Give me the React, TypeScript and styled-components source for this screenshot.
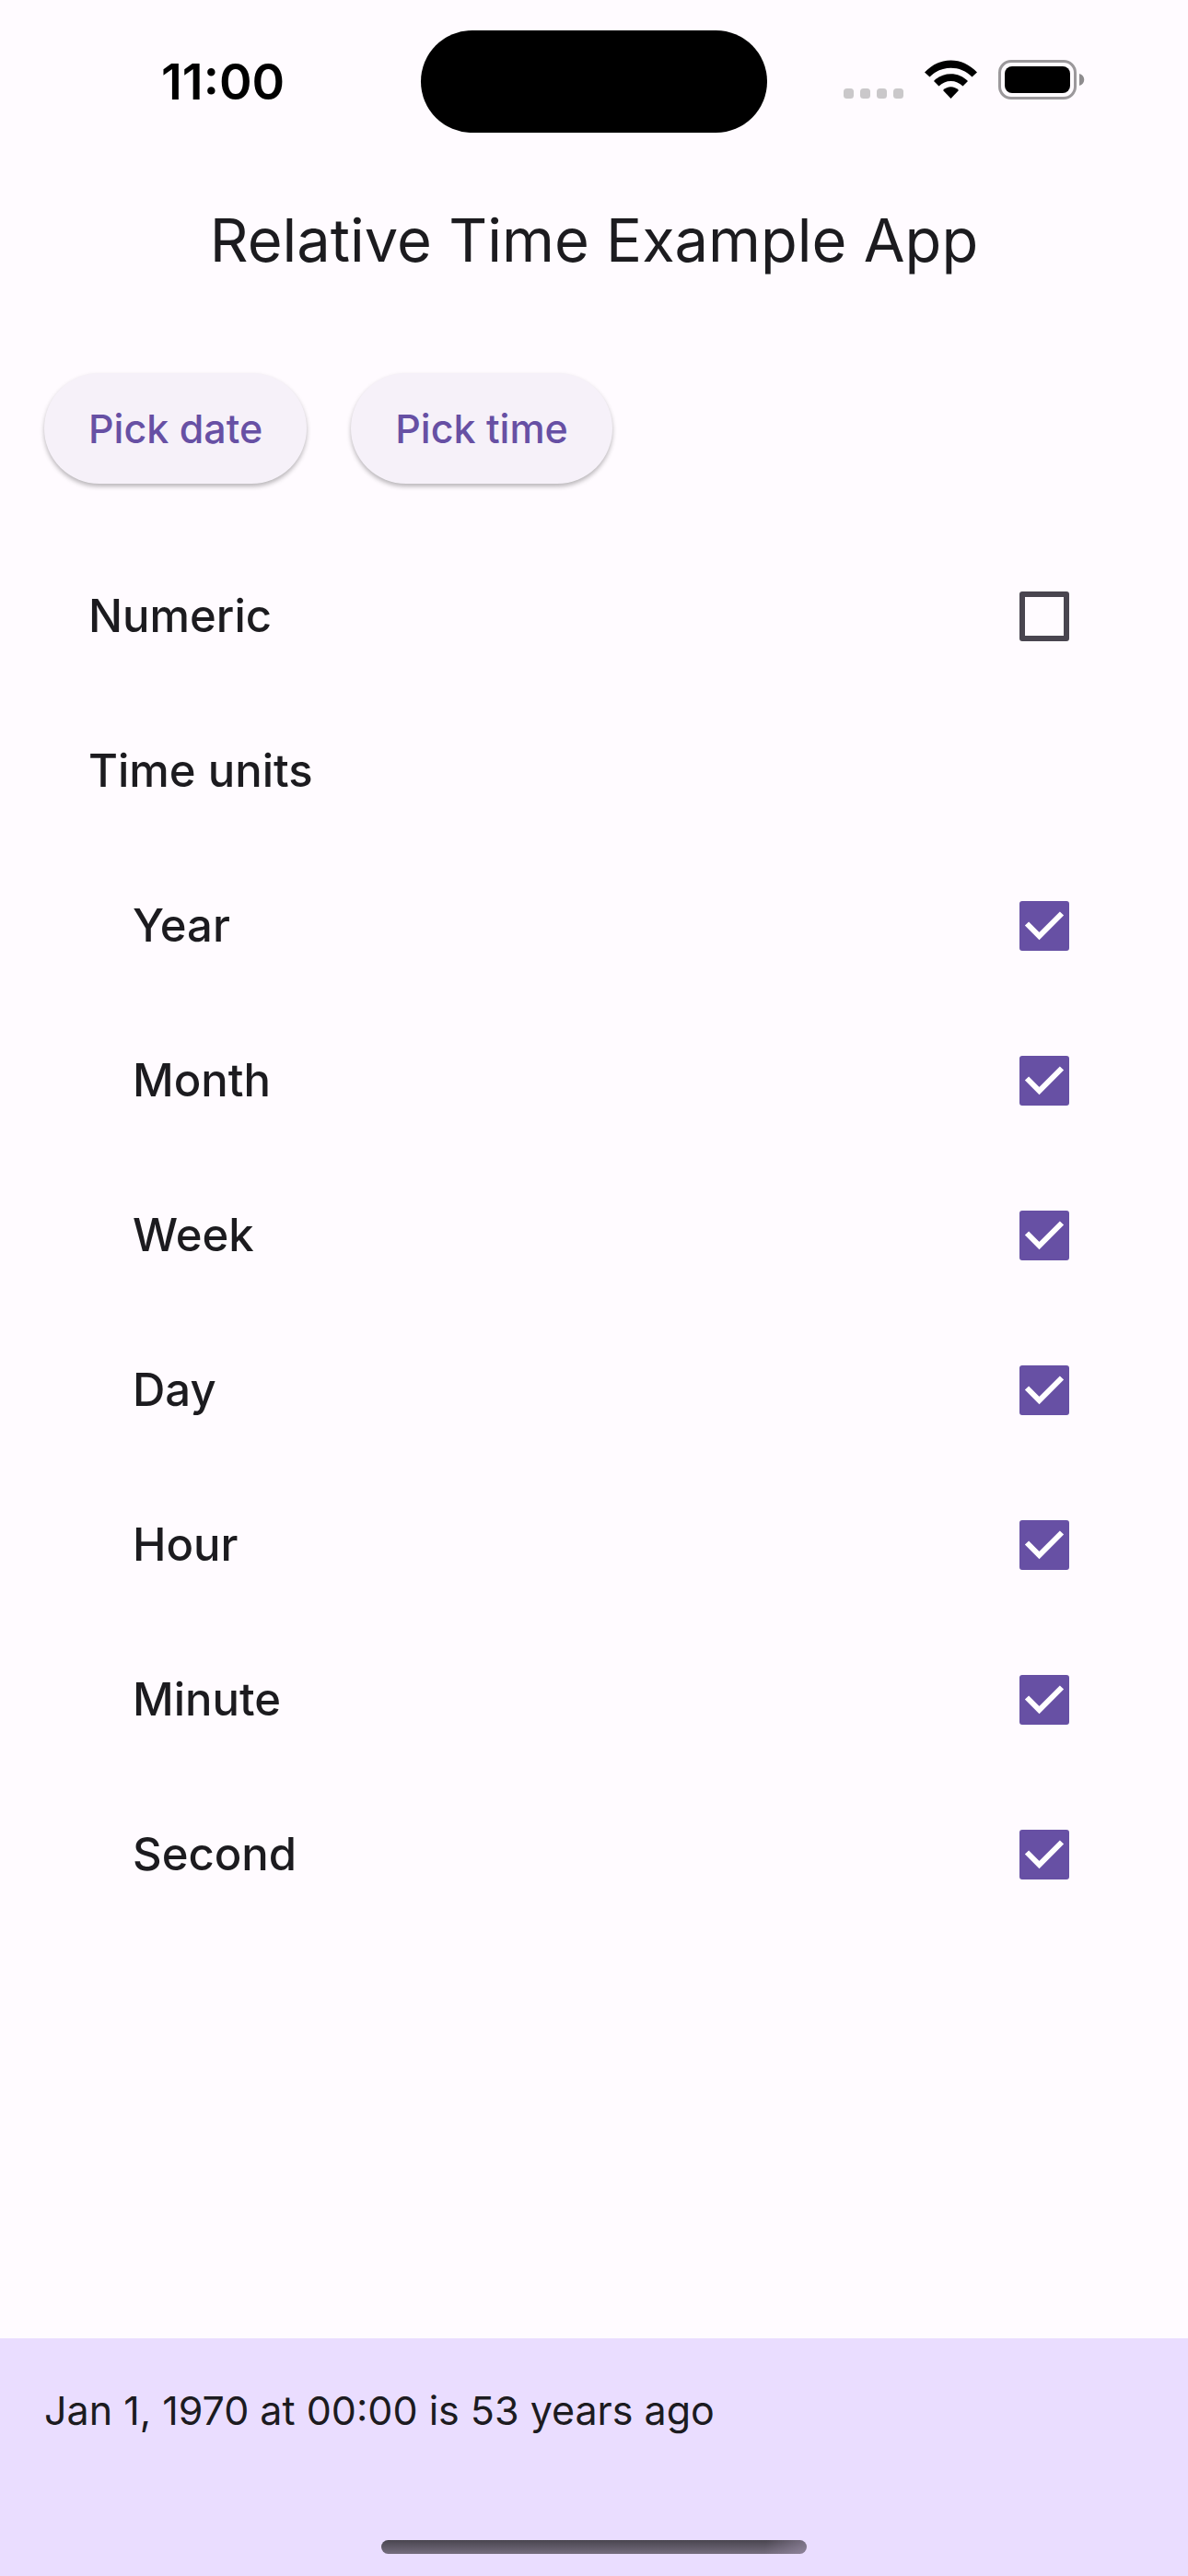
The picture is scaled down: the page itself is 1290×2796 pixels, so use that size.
import React, { useState } from 'react';
import styled, { createGlobalStyle } from 'styled-components';

const color = {
  background: '#fffbff',
  surface: '#f6f1f9',
  text: '#1c1b1f',
  primary: '#6750a4',
  outline: '#49454f',
  container: '#eaddff',
};

const GlobalStyle = createGlobalStyle`
  *, *::before, *::after { box-sizing: border-box; }
  body {
    margin: 0;
    background: ${color.background};
    color: ${color.text};
    font-family: Inter, Roboto, "Liberation Sans", sans-serif;
  }
`;

const Screen = styled.div`
  display: flex;
  flex-direction: column;
  min-height: 100vh;
`;

const StatusBar = styled.div`
  display: grid;
  grid-template-columns: 1fr 376px 1fr;
  align-items: center;
  height: 177px;
  color: #000;
`;

const Clock = styled.time`
  padding-left: 175px;
  font-size: 54px;
  font-weight: 600;
  line-height: 60px;
`;

const Island = styled.div`
  height: 111px;
  border-radius: 56px;
  background: #000;
`;

const StatusIcons = styled.div`
  display: flex;
  justify-content: flex-end;
  padding-right: 111px;
`;

const AppBar = styled.header`
  display: flex;
  align-items: center;
  justify-content: center;
  height: 168px;
`;

const Title = styled.h1`
  margin: 0;
  font-size: 65px;
  font-weight: 400;
  line-height: 84px;
`;

const Content = styled.main`
  flex: 1;
  padding: 60px 48px;
`;

const Actions = styled.div`
  display: flex;
  gap: 48px;
  margin-bottom: 60px;
`;

const ActionButton = styled.button`
  height: 120px;
  padding: 0 48px;
  border: 0;
  border-radius: 60px;
  background: ${color.surface};
  box-shadow: 0 3px 5px rgba(0, 0, 0, 0.28);
  color: ${color.primary};
  font-family: inherit;
  font-size: 43px;
  font-weight: 500;
  line-height: 60px;
  cursor: pointer;
`;

const UnitGroup = styled.fieldset`
  margin: 0;
  padding: 0;
  border: 0;
`;

const GroupTitle = styled.legend`
  display: flex;
  align-items: center;
  height: 168px;
  padding: 0 48px;
  font-size: 49px;
  font-weight: 500;
  line-height: 72px;
`;

const OptionRow = styled.label<{ $nested?: boolean }>`
  display: flex;
  align-items: center;
  justify-content: space-between;
  height: 168px;
  padding: 0 81px 0 ${({ $nested }) => ($nested ? 96 : 48)}px;
  font-size: 49px;
  font-weight: 500;
  line-height: 72px;
  cursor: pointer;
`;

const CheckArea = styled.span`
  display: grid;
  width: 54px;
  height: 54px;
  > * { grid-area: 1 / 1; }
`;

const CheckInput = styled.input`
  appearance: none;
  width: 54px;
  height: 54px;
  margin: 0;
  border: 6px solid ${color.outline};
  border-radius: 3px;
  cursor: pointer;
  &:checked {
    border-color: ${color.primary};
    background: ${color.primary};
  }
`;

const CheckMark = styled.svg`
  pointer-events: none;
`;

const BottomBar = styled.footer`
  display: flex;
  flex-direction: column;
  justify-content: space-between;
  align-items: center;
  height: 258px;
  padding: 48px 48px 24px;
  background: ${color.container};
`;

const Result = styled.p`
  align-self: stretch;
  margin: 0;
  font-size: 43px;
  font-weight: 400;
  line-height: 60px;
`;

const HomeIndicator = styled.div`
  width: 462px;
  height: 15px;
  border-radius: 8px;
  background:
    linear-gradient(100deg, transparent 90%, rgba(170, 155, 185, 0.5)),
    linear-gradient(#49454f, #756d7e);
`;

const units = ['Year', 'Month', 'Week', 'Day', 'Hour', 'Minute', 'Second'];

interface OptionProps {
  label: string;
  checked: boolean;
  nested?: boolean;
  onToggle: () => void;
}

function Option({ label, checked, nested, onToggle }: OptionProps) {
  return (
    <OptionRow $nested={nested}>
      {label}
      <CheckArea>
        <CheckInput type="checkbox" checked={checked} onChange={onToggle} />
        {checked && (
          <CheckMark width="54" height="54" viewBox="0 0 54 54" aria-hidden="true">
            <path d="M8 24.5 21.5 38 46 13.5" fill="none" stroke="#fff" strokeWidth="6" />
          </CheckMark>
        )}
      </CheckArea>
    </OptionRow>
  );
}

function SystemIcons() {
  return (
    <svg width="263" height="48" viewBox="0 0 263 48" aria-hidden="true">
      {[0, 18, 36, 54].map((x) => (
        <rect key={x} x={x} y="31" width="11" height="11" rx="3.5" fill="#cac8ca" />
      ))}
      <path d="M88 13.5C104-4 129-4 145 13.5L139.500 18.500C127 5.500 106 5.500 93.500 18.500Z" />
      <path d="M98 23C108 12.500 125 12.500 135 23L129.500 28.500C122.500 21 110.500 21 103.500 28.500Z" />
      <path d="M108 33C113 28 120 28 125 33L116.500 42Z" />
      <rect x="169.500" y="1.500" width="82" height="40" rx="12.500" fill="none" stroke="#9b989b" strokeWidth="3" />
      <rect x="175" y="7" width="71" height="29" rx="8" />
      <path d="M256 15C263 17 263 26 256 28Z" fill="#8e8c8e" />
    </svg>
  );
}

export default function App() {
  const [numeric, setNumeric] = useState(false);
  const [selected, setSelected] = useState<string[]>(units);

  const toggleUnit = (unit: string) =>
    setSelected((current) =>
      current.includes(unit) ? current.filter((item) => item !== unit) : [...current, unit],
    );

  return (
    <Screen>
      <GlobalStyle />
      <StatusBar>
        <Clock>11:00</Clock>
        <Island />
        <StatusIcons>
          <SystemIcons />
        </StatusIcons>
      </StatusBar>
      <AppBar>
        <Title>Relative Time Example App</Title>
      </AppBar>
      <Content>
        <Actions>
          <ActionButton type="button">Pick date</ActionButton>
          <ActionButton type="button">Pick time</ActionButton>
        </Actions>
        <Option label="Numeric" checked={numeric} onToggle={() => setNumeric(!numeric)} />
        <UnitGroup>
          <GroupTitle>Time units</GroupTitle>
          {units.map((unit) => (
            <Option
              key={unit}
              nested
              label={unit}
              checked={selected.includes(unit)}
              onToggle={() => toggleUnit(unit)}
            />
          ))}
        </UnitGroup>
      </Content>
      <BottomBar>
        <Result>Jan 1, 1970 at 00:00 is 53 years ago</Result>
        <HomeIndicator />
      </BottomBar>
    </Screen>
  );
}
